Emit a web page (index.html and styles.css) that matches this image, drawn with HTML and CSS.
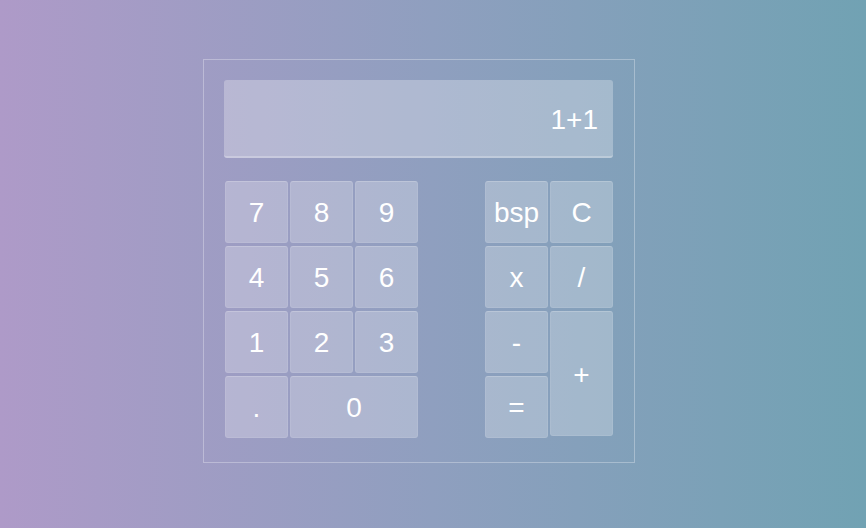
FILE: index.html
```html
<!DOCTYPE html>
<html>
<head>
<meta charset="utf-8">
<link rel="stylesheet" href="styles.css">
</head>
<body>
<div class="calc">
  <div class="display">1+1</div>
  <div class="pads">
    <div class="nums">
      <button class="key">7</button>
      <button class="key">8</button>
      <button class="key">9</button>
      <button class="key">4</button>
      <button class="key">5</button>
      <button class="key">6</button>
      <button class="key">1</button>
      <button class="key">2</button>
      <button class="key">3</button>
      <button class="key">.</button>
      <button class="key wide">0</button>
    </div>
    <div class="ops">
      <button class="key">bsp</button>
      <button class="key">C</button>
      <button class="key">x</button>
      <button class="key">/</button>
      <button class="key">-</button>
      <button class="key tall">+</button>
      <button class="key">=</button>
    </div>
  </div>
</div>
</body>
</html>
```

FILE: styles.css
```css
html, body {
  margin: 0;
  height: 100%;
}
body {
  background: linear-gradient(to right, #ae9ac8 0%, #8f9fbf 50%, #71a2b3 100%);
  font-family: "Liberation Sans", Arial, sans-serif;
  overflow: hidden;
}
.calc {
  box-sizing: border-box;
  width: 432px;
  height: 404px;
  margin: 59px 0 0 203px;
  border: 1px solid rgba(255,255,255,0.3);
  padding: 20px 21px 20px 20px;
}
.display {
  box-sizing: border-box;
  height: 78px;
  background: rgba(255,255,255,0.28);
  border-radius: 3px;
  border-bottom: 2px solid rgba(255,255,255,0.25);
  color: #fff;
  font-size: 28px;
  display: flex;
  align-items: center;
  justify-content: flex-end;
  padding-right: 15px;
  padding-top: 4px;
}
.pads {
  display: flex;
  justify-content: space-between;
  margin-top: 23px;
  padding: 0 0 0 1px;
}
.nums, .ops {
  display: grid;
  grid-template-rows: repeat(4, 62px);
  row-gap: 3px;
  column-gap: 2px;
}
.nums {
  grid-template-columns: repeat(3, 63px);
}
.ops {
  grid-template-columns: repeat(2, 63px);
}
.key {
  margin: 0;
  padding: 2px 0 0;
  background: rgba(255,255,255,0.25);
  border: 1px solid rgba(255,255,255,0.08);
  border-top-color: rgba(255,255,255,0.2);
  border-radius: 3px;
  color: #fff;
  font-family: "Liberation Sans", Arial, sans-serif;
  font-size: 28px;
  line-height: 1;
}
.wide {
  grid-column: span 2;
}
.tall {
  grid-row: span 2;
  margin-bottom: 2px;
}
```
